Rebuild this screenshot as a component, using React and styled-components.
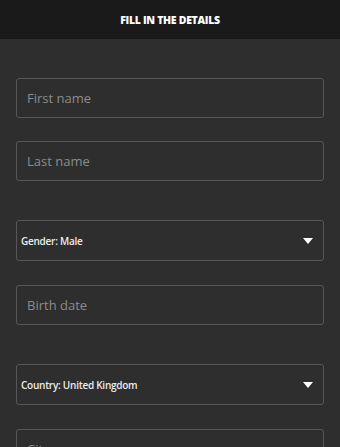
import React from 'react';
import styled, {createGlobalStyle} from 'styled-components';

const GlobalStyle = createGlobalStyle`
  html, body {
    margin: 0;
    padding: 0;
    background: #2e2e2e;
  }
  body {
    font-family: 'Open Sans', 'Noto Sans', sans-serif;
  }
`;

const Page = styled.div`
  width: 340px;
  min-height: 447px;
  background: #2e2e2e;
  overflow: hidden;
`;

const Header = styled.header`
  height: 39px;
  background: #1a1a1a;
  display: flex;
  align-items: center;
  justify-content: center;
  color: #ffffff;
  font-size: 10.5px;
  font-weight: 800;
  letter-spacing: -0.3px;
  text-transform: uppercase;
`;

const Form = styled.form`
  display: flex;
  flex-direction: column;
  padding: 0 16px;
`;

const Section = styled.div`
  display: flex;
  flex-direction: column;
  gap: ${(p) => p.$gap || 23}px;
  padding-top: 39px;
`;

const TextInput = styled.input`
  box-sizing: border-box;
  height: 40px;
  width: 100%;
  margin: 0;
  padding: 0 10px;
  background: transparent;
  border: 1px solid #575757;
  border-radius: 3px;
  color: #e6e6e6;
  font-family: 'Open Sans', 'Noto Sans', sans-serif;
  font-size: 13px;
  outline: none;

  &::placeholder {
    color: #8c8c8c;
  }
`;

const SelectBox = styled.div`
  box-sizing: border-box;
  height: 41px;
  display: flex;
  align-items: center;
  padding: 0 10px 0 4px;
  border: 1px solid #575757;
  border-radius: 3px;
`;

const Select = styled.select`
  flex: 1;
  appearance: none;
  background: transparent;
  border: none;
  outline: none;
  color: #ececec;
  font-family: 'Open Sans', 'Noto Sans', sans-serif;
  font-size: 10px;
  font-weight: 600;
  letter-spacing: -0.25px;
  padding: 0;

  option {
    background: #2e2e2e;
  }
`;

const Arrow = () => (
  <svg width="10" height="6" viewBox="0 0 10 6">
    <path d="M0 0 H10 L5 6 Z" fill="#ffffff" />
  </svg>
);

const Dropdown = ({value, options}) => (
  <SelectBox>
    <Select defaultValue={value}>
      {options.map((o) => (
        <option key={o} value={o}>
          {o}
        </option>
      ))}
    </Select>
    <Arrow />
  </SelectBox>
);

export default function App() {
  return (
    <Page>
      <GlobalStyle />
      <Header>Fill in the details</Header>
      <Form>
        <Section>
          <TextInput placeholder="First name" />
          <TextInput placeholder="Last name" />
        </Section>
        <Section $gap={24}>
          <Dropdown value="Gender: Male" options={['Gender: Male', 'Gender: Female']} />
          <TextInput placeholder="Birth date" />
        </Section>
        <Section $gap={24}>
          <Dropdown
            value="Country: United Kingdom"
            options={['Country: United Kingdom', 'Country: Ireland', 'Country: France']}
          />
          <TextInput placeholder="City" />
        </Section>
      </Form>
    </Page>
  );
}
